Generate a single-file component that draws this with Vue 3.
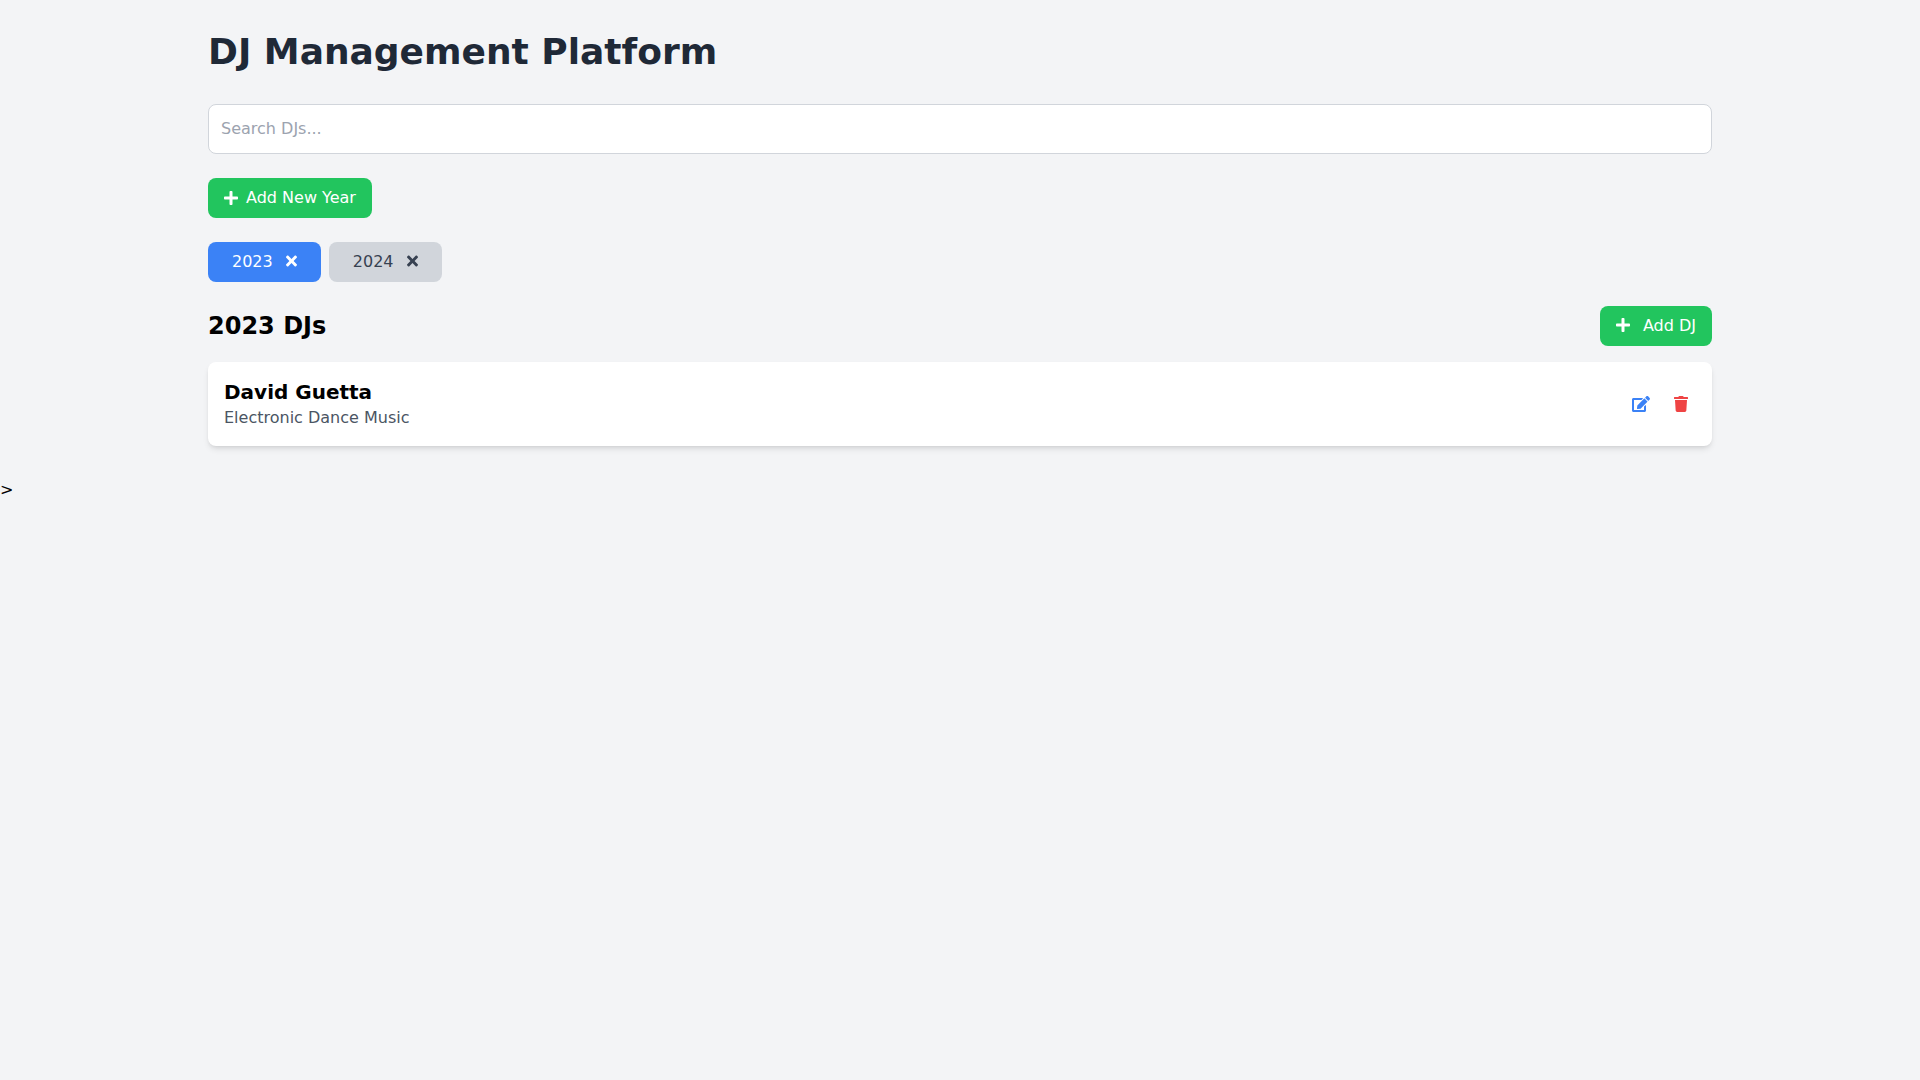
<script setup>
import { computed, ref } from 'vue'

const years = ref([
  { year: 2023, djs: [{ name: 'David Guetta', genre: 'Electronic Dance Music' }] },
  { year: 2024, djs: [] },
])
const activeYear = ref(2023)
const search = ref('')

const visibleDjs = computed(() => {
  const entry = years.value.find((y) => y.year === activeYear.value)
  const term = search.value.toLowerCase()
  return entry ? entry.djs.filter((dj) => dj.name.toLowerCase().includes(term)) : []
})

function addYear() {
  const next = Math.max(2022, ...years.value.map((y) => y.year)) + 1
  years.value.push({ year: next, djs: [] })
}

function removeYear(year) {
  years.value = years.value.filter((y) => y.year !== year)
}

function removeDj(dj) {
  const entry = years.value.find((y) => y.year === activeYear.value)
  entry.djs = entry.djs.filter((d) => d.name !== dj.name)
}
</script>

<template>
  <main class="container">
    <h1 class="title">DJ Management Platform</h1>

    <div class="search-row">
      <input v-model="search" class="search" type="text" placeholder="Search DJs..." aria-label="Search DJs" />
    </div>

    <button class="btn btn-year" type="button" @click="addYear">
      <svg class="icon icon-plus" viewBox="0 0 448 512" aria-hidden="true">
        <path d="M416 208H272V64c0-17.67-14.33-32-32-32h-32c-17.67 0-32 14.33-32 32v144H32c-17.67 0-32 14.33-32 32v32c0 17.67 14.33 32 32 32h144v144c0 17.67 14.33 32 32 32h32c17.67 0 32-14.33 32-32V304h144c17.67 0 32-14.33 32-32v-32c0-17.67-14.33-32-32-32z" />
      </svg>
      <span>Add New Year</span>
    </button>

    <div class="tabs">
      <div v-for="y in years" :key="y.year" class="tab" :class="{ active: y.year === activeYear }">
        <button type="button" @click="activeYear = y.year">{{ y.year }}</button>{{ ' ' }}<button class="tab-close" type="button" :aria-label="`Remove ${y.year}`" @click="removeYear(y.year)">
          <svg class="icon icon-times" viewBox="0 0 352 512" aria-hidden="true">
            <path d="M242.72 256l100.07-100.07c12.28-12.28 12.28-32.19 0-44.48l-22.24-22.24c-12.28-12.28-32.19-12.28-44.48 0L176 189.28 75.93 89.21c-12.28-12.28-32.19-12.28-44.48 0L9.21 111.45c-12.28 12.28-12.28 32.19 0 44.48L109.28 256 9.21 356.07c-12.28 12.28-12.28 32.19 0 44.48l22.24 22.24c12.28 12.28 32.2 12.28 44.48 0L176 322.72l100.07 100.07c12.28 12.28 32.2 12.28 44.48 0l22.24-22.24c12.28-12.28 12.28-32.19 0-44.48L242.72 256z" />
          </svg>
        </button>
      </div>
    </div>

    <section>
      <div class="section-head">
        <h2 class="section-title">{{ activeYear }} DJs</h2>
        <button class="btn" type="button">
          <svg class="icon icon-plus icon-lead" viewBox="0 0 448 512" aria-hidden="true">
            <path d="M416 208H272V64c0-17.67-14.33-32-32-32h-32c-17.67 0-32 14.33-32 32v144H32c-17.67 0-32 14.33-32 32v32c0 17.67 14.33 32 32 32h144v144c0 17.67 14.33 32 32 32h32c17.67 0 32-14.33 32-32V304h144c17.67 0 32-14.33 32-32v-32c0-17.67-14.33-32-32-32z" />
          </svg>
          Add DJ
        </button>
      </div>

      <div class="cards">
        <article v-for="dj in visibleDjs" :key="dj.name" class="card">
          <div>
            <h3 class="dj-name">{{ dj.name }}</h3>
            <p class="dj-genre">{{ dj.genre }}</p>
          </div>
          <div class="actions">
            <button class="action edit" type="button" :aria-label="`Edit ${dj.name}`">
              <svg class="icon icon-edit" viewBox="0 0 576 512" aria-hidden="true">
                <path d="M402.6 83.2l90.2 90.2c3.8 3.8 3.8 10 0 13.8L274.4 405.6l-92.8 10.3c-12.4 1.4-22.9-9.1-21.5-21.5l10.3-92.8L388.8 83.2c3.8-3.8 10-3.8 13.8 0zm162-22.9l-48.8-48.8c-15.2-15.2-39.9-15.2-55.2 0l-35.4 35.4c-3.8 3.8-3.8 10 0 13.8l90.2 90.2c3.8 3.8 10 3.8 13.8 0l35.4-35.4c15.2-15.3 15.2-40 0-55.2zM384 346.2V448H64V128h229.8c3.2 0 6.2-1.3 8.5-3.5l40-40c7.6-7.6 2.2-20.5-8.5-20.5H48C21.5 64 0 85.5 0 112v352c0 26.5 21.5 48 48 48h352c26.5 0 48-21.5 48-48V306.2c0-10.7-12.9-16-20.5-8.5l-40 40c-2.2 2.3-3.5 5.3-3.5 8.5z" />
              </svg>
            </button>
            <button class="action delete" type="button" :aria-label="`Delete ${dj.name}`" @click="removeDj(dj)">
              <svg class="icon icon-trash" viewBox="0 0 448 512" aria-hidden="true">
                <path d="M432 32H312l-9.4-18.7A24 24 0 0 0 281.1 0H166.8a23.72 23.72 0 0 0-21.4 13.3L136 32H16A16 16 0 0 0 0 48v32a16 16 0 0 0 16 16h416a16 16 0 0 0 16-16V48a16 16 0 0 0-16-16zM53.2 467a48 48 0 0 0 47.9 45h245.8a48 48 0 0 0 47.9-45L416 128H32z" />
              </svg>
            </button>
          </div>
        </article>
      </div>
    </section>
  </main>
  <span>&gt;</span>
</template>

<style>
body {
  margin: 0;
  background: #f3f4f6;
  color: #000;
  font-family: "DejaVu Sans", sans-serif;
  font-size: 16px;
  line-height: 24px;
}
</style>

<style scoped>
.container {
  box-sizing: border-box;
  max-width: 1536px;
  margin: 0 auto;
  padding: 32px 16px;
}

h1,
h2,
h3,
p {
  margin: 0;
}

button {
  margin: 0;
  padding: 0;
  border: 0;
  background: transparent;
  color: inherit;
  font: inherit;
  cursor: pointer;
}

.title {
  margin-bottom: 32px;
  color: #1f2937;
  font-size: 36px;
  line-height: 40px;
  font-weight: 700;
}

.search-row {
  margin-bottom: 24px;
}

.search {
  display: block;
  box-sizing: border-box;
  width: 100%;
  margin: 0;
  padding: 12px;
  border: 1px solid #d1d5db;
  border-radius: 8px;
  background: #fff;
  color: #000;
  font: inherit;
}

.search::placeholder {
  color: #9ca3af;
  opacity: 1;
}

.icon {
  height: 16px;
  fill: currentColor;
  vertical-align: -2px;
}

.icon-plus,
.icon-trash {
  width: 14px;
}

.icon-times {
  width: 11px;
}

.icon-edit {
  width: 18px;
}

.icon-lead {
  margin-right: 8px;
}

.btn {
  padding: 8px 16px;
  border-radius: 8px;
  background: #22c55e;
  color: #fff;
}

.btn-year {
  display: flex;
  align-items: center;
  gap: 8px;
  margin-bottom: 24px;
}

.tabs {
  display: flex;
  flex-wrap: wrap;
  gap: 8px;
  margin-bottom: 24px;
}

.tab {
  padding: 8px 24px;
  border-radius: 8px;
  background: #d1d5db;
  color: #374151;
}

.tab.active {
  background: #3b82f6;
  color: #fff;
}

.tab-close {
  margin-left: 8px;
}

.section-head {
  display: flex;
  align-items: center;
  justify-content: space-between;
  margin-bottom: 16px;
}

.section-title {
  font-size: 24px;
  line-height: 32px;
  font-weight: 700;
}

.cards {
  display: grid;
  gap: 16px;
}

.card {
  display: flex;
  align-items: center;
  justify-content: space-between;
  padding: 16px;
  border-radius: 8px;
  background: #fff;
  box-shadow: 0 4px 6px -1px rgba(0, 0, 0, 0.1), 0 2px 4px -2px rgba(0, 0, 0, 0.1);
}

.dj-name {
  font-size: 20px;
  line-height: 28px;
  font-weight: 700;
}

.dj-genre {
  color: #4b5563;
}

.actions {
  display: flex;
  gap: 8px;
}

.action {
  padding: 8px;
}

.action .icon {
  display: block;
}

.edit {
  color: #3b82f6;
}

.delete {
  color: #ef4444;
}
</style>
